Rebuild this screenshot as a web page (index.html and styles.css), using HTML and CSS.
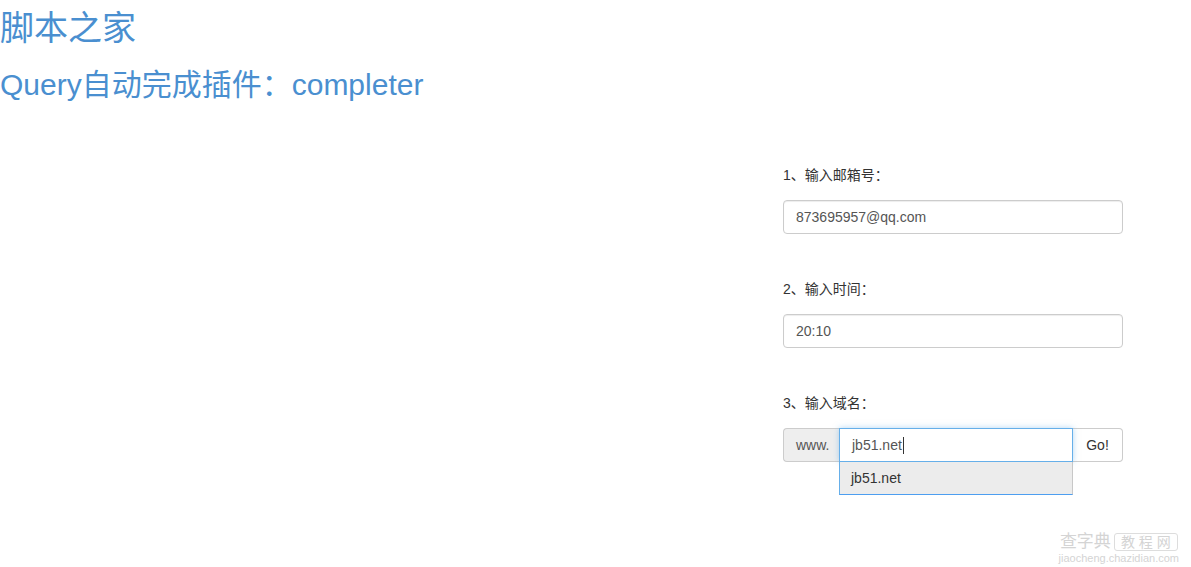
FILE: index.html
```html
<!DOCTYPE html>
<html lang="zh-CN">
<head>
    <meta charset="UTF-8">
    <title>jQuery自动完成插件：completer</title>
    <link rel="stylesheet" href="styles.css">
</head>
<body>
    <h1 class="site-title">脚本之家</h1>
    <h2 class="page-title">Query自动完成插件：completer</h2>

    <div class="row">
        <form class="demo-form">
            <div class="form-group">
                <label for="email">1、输入邮箱号：</label>
                <input type="text" id="email" class="form-control" value="873695957@qq.com">
            </div>
            <div class="form-group">
                <label for="time">2、输入时间：</label>
                <input type="text" id="time" class="form-control" value="20:10">
            </div>
            <div class="form-group">
                <label for="domain">3、输入域名：</label>
                <div class="input-group">
                    <span class="input-addon">www.</span>
                    <div class="input-wrap">
                        <div class="fake-input focus">jb51.net<span class="caret"></span></div>
                        <ul class="completer">
                            <li>jb51.net</li>
                        </ul>
                    </div>
                    <button type="button" class="btn">Go!</button>
                </div>
            </div>
        </form>
    </div>

    <div class="watermark">
        <div class="wm-top">查字典<span class="wm-box">教 程 网</span></div>
        <div class="wm-url">jiaocheng.chazidian.com</div>
    </div>
</body>
</html>
```

FILE: styles.css
```css
body {
    margin: 0;
    font-family: 'Liberation Sans', Arial, 'Noto Sans CJK SC', sans-serif;
    font-size: 14px;
    line-height: 20px;
    color: #333;
    background: #fff;
    height: 567px;
    overflow: hidden;
    position: relative;
}

.site-title {
    margin: 8px 0 0 0;
    font-size: 34px;
    line-height: 40px;
    font-weight: normal;
    color: #4a8fd0;
}

.page-title {
    margin: 20px 0 0 0;
    font-size: 30px;
    line-height: 34px;
    font-weight: normal;
    color: #4a8fd0;
}

.row {
    display: flex;
    justify-content: flex-end;
    padding-right: 68px;
    margin-top: 63px;
}

.demo-form {
    width: 340px;
}

.form-group {
    margin-bottom: 45px;
}

.form-group label {
    display: block;
    margin-bottom: 15px;
    color: #333;
}

.form-control {
    display: block;
    box-sizing: border-box;
    width: 100%;
    height: 34px;
    padding: 6px 12px;
    font-family: inherit;
    font-size: 14px;
    color: #555;
    border: 1px solid #ccc;
    border-radius: 4px;
    box-shadow: inset 0 1px 1px rgba(0, 0, 0, 0.075);
    outline: none;
}

.input-group {
    display: flex;
    height: 34px;
}

.input-addon {
    box-sizing: border-box;
    width: 56px;
    padding: 6px 12px;
    color: #555;
    background: #eee;
    border: 1px solid #ccc;
    border-right: none;
    border-radius: 4px 0 0 4px;
    text-align: center;
}

.input-wrap {
    position: relative;
    width: 234px;
}

.fake-input {
    box-sizing: border-box;
    height: 34px;
    padding: 6px 12px;
    color: #555;
    border: 1px solid #66afe9;
    box-shadow: 0 0 6px rgba(102, 175, 233, 0.5);
}

.caret {
    display: inline-block;
    width: 1px;
    height: 17px;
    margin-left: 1px;
    vertical-align: -4px;
    background: #333;
}

.completer {
    position: absolute;
    top: 34px;
    left: 0;
    right: 0;
    margin: 0;
    padding: 0;
    list-style: none;
    background: #ececec;
    border: 1px solid #c8c8c8;
    border-top: none;
    border-left-color: #66afe9;
    border-bottom-color: #4d9ef0;
}

.completer li {
    height: 32px;
    line-height: 32px;
    padding: 0 11px;
    color: #333;
}

.btn {
    box-sizing: border-box;
    width: 50px;
    height: 34px;
    padding: 6px 12px;
    font-family: inherit;
    font-size: 14px;
    color: #333;
    background: #fff;
    border: 1px solid #ccc;
    border-left: none;
    border-radius: 0 4px 4px 0;
}

.watermark {
    position: absolute;
    right: 12px;
    bottom: 2px;
    color: #d4d4d4;
    text-align: center;
}

.wm-top {
    font-size: 17px;
    line-height: 20px;
}

.wm-box {
    margin-left: 3px;
    padding: 0 6px;
    border: 1px solid #ddd;
    border-radius: 3px;
    font-size: 14px;
}

.wm-url {
    font-size: 11px;
    line-height: 13px;
}
```
